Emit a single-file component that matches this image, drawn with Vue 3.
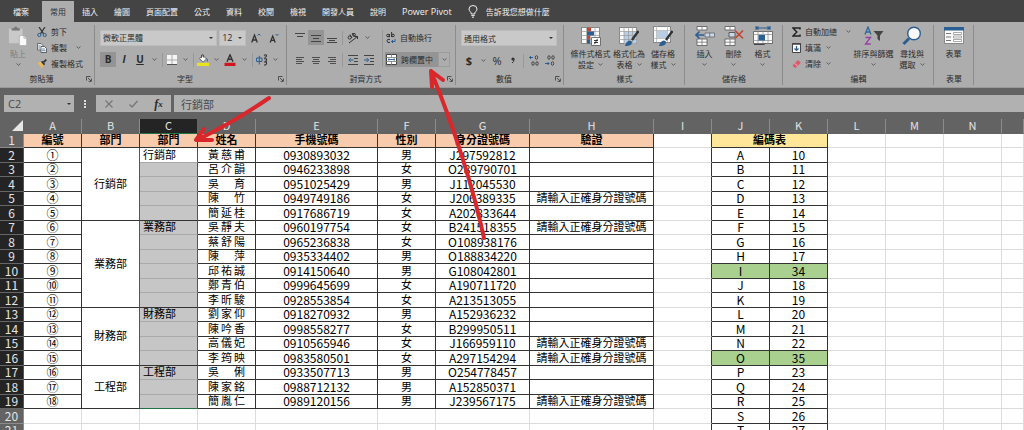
<script setup>
import { h, ref } from 'vue'

const Caret = () =>
  h('svg', { width: 5, height: 3, viewBox: '0 0 5 3' }, [
    h('path', { d: 'M0.5 0.4L2.5 2.3L4.5 0.4', fill: 'none', stroke: '#555', 'stroke-width': 0.9 }),
  ])

const Launcher = () =>
  h('svg', { width: 6, height: 6, viewBox: '0 0 6 6' }, [
    h('path', { d: 'M0.5 4.5V0.5H4.5M2 2L5 5M5.4 2.6V5.4H2.6', fill: 'none', stroke: '#444', 'stroke-width': 0.9 }),
  ])

const tabs = ['檔案', '常用', '插入', '繪圖', '頁面配置', '公式', '資料', '校閱', '檢視', '開發人員', '說明', 'Power Pivot']
const formula = ref('行銷部')
const cellName = ref('C2')
const fontName = ref('微軟正黑體')
const fontSize = ref('12')
const numberFormat = ref('通用格式')

const columns = ['A', 'B', 'C', 'D', 'E', 'F', 'G', 'H', 'I', 'J', 'K', 'L', 'M', 'N', '']
const warn = '請輸入正確身分證號碼'

const people = [
  ['①', '黃慈甫', '0930893032', '男', 'J297592812', ''],
  ['②', '呂介韻', '0946233898', '女', 'O289790701', ''],
  ['③', '吳育', '0951025429', '男', 'J112045530', ''],
  ['④', '陳竹', '0949749186', '女', 'J206389335', warn],
  ['⑤', '簡延桂', '0917686719', '女', 'A202833644', ''],
  ['⑥', '吳靜夫', '0960197754', '女', 'B241518355', warn],
  ['⑦', '蔡舒陽', '0965236838', '女', 'O108938176', ''],
  ['⑧', '陳萍', '0935334402', '男', 'O188834220', ''],
  ['⑨', '邱祐誠', '0914150640', '男', 'G108042801', ''],
  ['⑩', '鄭青伯', '0999645699', '女', 'A190711720', ''],
  ['⑪', '李昕駿', '0928553854', '女', 'A213513055', ''],
  ['⑫', '劉家仰', '0918270932', '男', 'A152936232', ''],
  ['⑬', '陳吟香', '0998558277', '女', 'B299950511', ''],
  ['⑭', '高儀妃', '0910565946', '女', 'J166959110', warn],
  ['⑮', '李筠映', '0983580501', '女', 'A297154294', warn],
  ['⑯', '吳俐', '0933507713', '男', 'O254778457', ''],
  ['⑰', '陳家銘', '0988712132', '男', 'A152850371', ''],
  ['⑱', '簡胤仁', '0989120156', '男', 'J239567175', warn],
]

const departments = {
  0: { name: '行銷部', span: 5 },
  5: { name: '業務部', span: 6 },
  11: { name: '財務部', span: 4 },
  15: { name: '工程部', span: 3 },
}

const codes = [
  ['A', 10], ['B', 11], ['C', 12], ['D', 13], ['E', 14], ['F', 15], ['G', 16], ['H', 17], ['I', 34], ['J', 18],
  ['K', 19], ['L', 20], ['M', 21], ['N', 22], ['O', 35], ['P', 23], ['Q', 24], ['R', 25], ['S', 26], ['T', 27],
]
</script>

<template>
  <div class="app">
    <nav class="tabs">
      <button v-for="t in tabs" :key="t" type="button" :class="['tab', { on: t === '常用', file: t === '檔案', latin: t === 'Power Pivot' }]">{{ t }}</button>
      <button type="button" class="tell">
        <svg width="10" height="13" viewBox="0 0 10 13" fill="none" stroke="#eee" stroke-width="1">
          <path d="M3.2 9V8C3 6.8 1 6.200 1 4A4 3.500 0 0 1 9 4C9 6.200 7 6.800 6.800 8V9ZM3.300 10.600H6.700M4 12.200H6" />
        </svg>
        <span>告訴我您想做什麼</span>
      </button>
    </nav>

    <div class="ribbon">
      <section class="group clip">
        <div class="body">
          <button type="button" class="big paste">
            <svg width="20" height="22" viewBox="0 0 20 22">
              <path d="M0 3H15V19H0Z" fill="#c9c9c9" />
              <path d="M3 5V2.500H5.500Q6 0.500 7.500 0.500T9.500 2.500H12V5Z" fill="#777" />
              <path d="M11.500 10.500H16.500L19.500 13.500V21.500H11.500Z" fill="#fafafa" stroke="#aaa" stroke-width="0.800" />
              <path d="M16.500 10.500V13.500H19.500" fill="none" stroke="#999" stroke-width="0.700" />
            </svg>
            <span class="dim">貼上</span>
            <Caret />
          </button>
          <div class="stack">
            <button type="button" class="small">
              <svg width="10" height="10" viewBox="0 0 10 10" fill="none">
                <path d="M2 0L6.600 6.800M8 0L3.400 6.800" stroke="#333" stroke-width="1.200" />
                <circle cx="2.300" cy="8" r="1.600" stroke="#2b5f93" /><circle cx="7.700" cy="8" r="1.600" stroke="#2b5f93" />
              </svg>剪下
            </button>
            <button type="button" class="small">
              <svg width="10" height="10" viewBox="0 0 10 10">
                <path d="M0.500 0.500H4L6 2.500V7H0.500Z" fill="#eee" stroke="#555" stroke-width="0.800" />
                <path d="M4 3.500H7.500L9.500 5.500V9.500H4Z" fill="#fff" stroke="#444" stroke-width="0.800" />
                <path d="M5 6H8M5 7.700H8.500M1.500 3H3.500M1.500 5H3" stroke="#2b5f93" stroke-width="0.700" />
              </svg>複製<Caret class="far" />
            </button>
            <button type="button" class="small">
              <svg width="10" height="10" viewBox="0 0 10 10">
                <path d="M0.500 4L4 2.800L7 6.500L4.500 9.500Q3.500 7 0.500 4Z" fill="#e9b95c" />
                <path d="M4 2.800L5.300 1.800L8 5L7 6.500Z" fill="#333" /><path d="M6.500 3.300L9.300 0.600" stroke="#333" stroke-width="1.800" />
              </svg>複製格式
            </button>
          </div>
        </div>
        <footer>剪貼簿<button type="button" class="launch" aria-label="剪貼簿設定"><Launcher /></button></footer>
      </section>

      <section class="group font">
        <div class="body rows">
          <div class="row fields">
            <label class="pick name"><select v-model="fontName" aria-label="字型"><option>微軟正黑體</option></select><i></i></label>
            <label class="pick size"><select v-model="fontSize" aria-label="字型大小"><option>12</option></select><i></i></label>
            <button type="button" class="t" aria-label="放大字型">
              <svg width="10" height="10" viewBox="0 0 10 10" fill="none" stroke="#333"><path d="M0.700 9.500L3.500 2L6.300 9.500M1.600 7H5.400" stroke-width="1.300" /><path d="M6.500 2.500L8 1L9.500 2.500" stroke="#2b5f93" /></svg>
            </button>
            <button type="button" class="t" aria-label="縮小字型">
              <svg width="10" height="10" viewBox="0 0 10 10" fill="none" stroke="#333"><path d="M1.200 9.500L3.700 3L6.200 9.500M2 7.300H5.400" stroke-width="1.300" /><path d="M6.500 1L8 2.500L9.500 1" stroke="#2b5f93" /></svg>
            </button>
          </div>
          <div class="row">
            <button type="button" class="t on"><b>B</b></button>
            <button type="button" class="t"><b class="it">I</b></button>
            <button type="button" class="t"><b class="un">U</b></button>
            <button type="button" class="c" aria-label="底線選項"><Caret /></button><hr />
            <button type="button" class="n" aria-label="框線">
              <svg width="10" height="10" viewBox="0 0 10 10"><path d="M0 0H10V10H0Z" fill="#f6f6f6" /><path d="M5 0V10M0 5H10" stroke="#aaa" /><path d="M0 9.500H10" stroke="#555" /></svg>
            </button>
            <button type="button" class="c" aria-label="框線選項"><Caret /></button><hr />
            <button type="button" class="n" aria-label="填滿色彩">
              <svg width="12" height="12" viewBox="0 0 12 12"><path d="M2.500 4.500L6 1.500L9.500 5L6 8.200Z" fill="#fafafa" stroke="#555" stroke-width="0.900" /><path d="M4.500 4V1Q5.500 0 6.500 1V3.500" fill="none" stroke="#444" stroke-width="0.800" /><path d="M9.500 4Q11.500 5 10.800 8Q9.500 7 9.500 4Z" fill="#2b5f93" /><path d="M0 8.800H12V12H0Z" fill="#e8e31c" /></svg>
            </button>
            <button type="button" class="c" aria-label="填滿色彩選項"><Caret /></button>
            <button type="button" class="t" aria-label="字型色彩">
              <svg width="12" height="12" viewBox="0 0 12 12"><path d="M3 7.800L6 0.800L9 7.800M4.200 5.300H7.800" fill="none" stroke="#333" stroke-width="1.400" /><path d="M0.500 8.800H11.500V12H0.500Z" fill="#d2141c" /></svg>
            </button>
            <button type="button" class="c" aria-label="字型色彩選項"><Caret /></button><hr />
            <button type="button" class="n" aria-label="注音標示">
              <svg width="12" height="12" viewBox="0 0 12 12" fill="none"><path d="M0.600 4H6V7.500H0.600ZM3.300 1.800V10.500" stroke="#2b5f93" /><path d="M8 1.500Q10 0 10.500 1.700Q10.500 3 8.500 3.500M8 5Q11 4 10.500 6.200T8 8H10.500Q11 10 9.500 11H8" stroke="#333" stroke-width="1.100" /></svg>
            </button>
            <button type="button" class="c" aria-label="注音標示選項"><Caret /></button>
          </div>
        </div>
        <footer>字型<button type="button" class="launch" aria-label="字型設定"><Launcher /></button></footer>
      </section>

      <section class="group align">
        <div class="body split">
          <div class="rows left">
            <div class="row">
              <button type="button" class="t" aria-label="靠上對齊"><svg width="10" height="12" viewBox="0 0 10 12" stroke="#444"><path d="M0 1.500H10M2 4.500H8" /></svg></button>
              <button type="button" class="t on" aria-label="置中對齊"><svg width="10" height="12" viewBox="0 0 10 12" stroke="#444"><path d="M0 3.500H10M2 6.500H8M0 9.500H10" /></svg></button>
              <button type="button" class="t" aria-label="靠下對齊"><svg width="10" height="12" viewBox="0 0 10 12" stroke="#444"><path d="M0 6.500H10M2 8.500H8M0 10.500H10" /></svg></button><hr />
              <button type="button" class="t" aria-label="方向"><svg width="12" height="12" viewBox="0 0 12 12" fill="none" stroke="#333"><path d="M2 11L10.500 4.500M8 4.500H10.500V7" /><circle cx="2.700" cy="5.500" r="1.600" /><path d="M3 2.500L5 6M5 1L8 5" /><circle cx="7" cy="2.800" r="1.400" /></svg></button>
              <button type="button" class="c" aria-label="方向選項"><Caret /></button>
            </div>
            <div class="row">
              <button type="button" class="t" aria-label="靠左"><svg width="8" height="8" viewBox="0 0 8 8" stroke="#444"><path d="M0 1.500H8M0 3.500H6M0 5.500H8M0 7.500H6" stroke-width="0.900" /></svg></button>
              <button type="button" class="t" aria-label="置中"><svg width="8" height="8" viewBox="0 0 8 8" stroke="#444"><path d="M0 1.500H8M1 3.500H7M0 5.500H8M1 7.500H7" stroke-width="0.900" /></svg></button>
              <button type="button" class="t" aria-label="靠右"><svg width="8" height="8" viewBox="0 0 8 8" stroke="#444"><path d="M0 1.500H8M2 3.500H8M0 5.500H8M2 7.500H8" stroke-width="0.900" /></svg></button><hr />
              <button type="button" class="t" aria-label="減少縮排"><svg width="10" height="10" viewBox="0 0 10 10" fill="none" stroke="#444"><path d="M0 0.500H10M6 3.500H10M6 6.500H10M0 9.500H10" /><path d="M5.500 5H1M2.800 3L0.800 5L2.800 7" stroke="#2b5f93" /></svg></button>
              <button type="button" class="t" aria-label="增加縮排"><svg width="10" height="10" viewBox="0 0 10 10" fill="none" stroke="#444"><path d="M0 0.500H10M6 3.500H10M6 6.500H10M0 9.500H10" /><path d="M0 5H4.500M2.700 3L4.700 5L2.700 7" stroke="#2b5f93" /></svg></button>
            </div>
          </div>
          <hr class="tall" />
          <div class="rows">
            <button type="button" class="wide">
              <svg width="10" height="12" viewBox="0 0 10 12" fill="none" stroke="#333"><circle cx="2" cy="3.500" r="1.300" /><path d="M3.500 2V5.200M5.600 0V5M4 7.500Q1 6.500 1 8.800T4 10.500" /><circle cx="7" cy="3.500" r="1.300" /><path d="M9 7V9.500H5.500M7 8L5.500 9.500L7 11" stroke="#2b5f93" /></svg>自動換行
            </button>
            <div class="row">
              <button type="button" class="wide on">
                <svg width="11" height="11" viewBox="0 0 11 11"><path d="M0.500 0.500H10.500V10.500H0.500Z" fill="#fff" stroke="#444" /><path d="M0 3.500H11M0 7.500H11M5.500 0V3.500M5.500 7.500V11" stroke="#777" stroke-width="0.800" /><path d="M2 5.500H9M3.300 4.500L2 5.500L3.300 6.500M7.700 4.500L9 5.500L7.700 6.500" fill="none" stroke="#2b5f93" stroke-width="0.900" /></svg>跨欄置中
              </button>
              <button type="button" class="c edge" aria-label="跨欄置中選項"><Caret /></button>
            </div>
          </div>
        </div>
        <footer>對齊方式<button type="button" class="launch" aria-label="對齊設定"><Launcher /></button></footer>
      </section>

      <section class="group num">
        <div class="body rows">
          <label class="pick format"><select v-model="numberFormat" aria-label="數值格式"><option>通用格式</option></select><i></i></label>
          <div class="row">
            <button type="button" class="t sign"><b>$</b></button>
            <button type="button" class="c" aria-label="會計格式選項"><Caret /></button>
            <button type="button" class="t sign">%</button>
            <button type="button" class="t" aria-label="千分位樣式"><svg width="4" height="7" viewBox="0 0 4 7"><circle cx="2" cy="2" r="1.600" fill="#333" /><path d="M3 2.500Q3 5 1 6" fill="none" stroke="#333" /></svg></button><hr />
            <button type="button" class="t" aria-label="增加小數位數"><svg width="10" height="11" viewBox="0 0 10 11" fill="none" stroke="#444"><path d="M4 2.500H0.500M2 1L0.500 2.500L2 4" stroke="#2b5f93" /><ellipse cx="7.500" cy="2.500" rx="1.200" ry="1.800" /><ellipse cx="4" cy="8.500" rx="1.200" ry="1.800" /><ellipse cx="8" cy="8.500" rx="1.200" ry="1.800" /></svg></button>
            <button type="button" class="t" aria-label="減少小數位數"><svg width="10" height="11" viewBox="0 0 10 11" fill="none" stroke="#444"><ellipse cx="4" cy="2.500" rx="1.200" ry="1.800" /><ellipse cx="8" cy="2.500" rx="1.200" ry="1.800" /><path d="M0 8.500H4M2.600 7L4 8.500L2.600 10" stroke="#2b5f93" /><ellipse cx="7.500" cy="8.500" rx="1.200" ry="1.800" /></svg></button>
          </div>
        </div>
        <footer>數值<button type="button" class="launch" aria-label="數值設定"><Launcher /></button></footer>
      </section>

      <section class="group styles">
        <div class="body">
          <button type="button" class="big w4">
            <svg width="20" height="20" viewBox="0 0 20 20"><path d="M0.500 1.500H18.500V17.500H0.500Z" fill="#fafafa" stroke="#666" stroke-width="0.700" /><path d="M0 5.500H18M0 9.500H18M0 13.500H18M5.500 1V17M9.500 1V17M14 1V17" stroke="#999" stroke-width="0.700" /><path d="M6 1.500H10V5.500H6ZM6 9.500H9V13.500H6Z" fill="#c2452d" /><path d="M6 5.500H13V9.500H6ZM6 13.500H9V17.500H6Z" fill="#2b5f93" /><path d="M10.500 11.500H19.500V19.500H10.500Z" fill="#fff" stroke="#555" stroke-width="0.800" /><path d="M13 14.500H17M13 16.500H17M16.500 12.800L13.500 18.200" stroke="#222" stroke-width="0.900" /></svg>
            <span>條件式格式</span><span>設定 <Caret /></span>
          </button>
          <button type="button" class="big w3">
            <svg width="20" height="20" viewBox="0 0 20 20"><path d="M0.500 1.500H17.500V17.500H0.500Z" fill="#fafafa" stroke="#666" stroke-width="0.700" /><path d="M5 5.500H17.500V17.500H5Z" fill="#b9cee4" /><path d="M0 5.500H18M0 9.500H18M0 13.500H18M5 1V17M9.500 1V17M13.500 1V17" stroke="#999" stroke-width="0.700" /><path d="M19.500 5L13 14" stroke="#333" stroke-width="2.400" /><path d="M6 20Q7 15 11 14.500Q14 15 12.500 18Q11 20 6 20Z" fill="#2b5f93" /></svg>
            <span>格式化為</span><span>表格 <Caret /></span>
          </button>
          <button type="button" class="big w3">
            <svg width="20" height="20" viewBox="0 0 20 20"><path d="M0.500 0.500H17.500V16.500H0.500Z" fill="#fafafa" stroke="#666" stroke-width="0.700" /><path d="M0 4.500H18M0 12.500H18M3.500 0V16M14.500 0V16" stroke="#aaa" stroke-width="0.700" /><path d="M4 5H14V12H4Z" fill="#b9cee4" /><path d="M19.500 5L13 14" stroke="#333" stroke-width="2.400" /><path d="M6 20Q7 15 11 14.500Q14 15 12.500 18Q11 20 6 20Z" fill="#2b5f93" /></svg>
            <span>儲存格</span><span>樣式 <Caret /></span>
          </button>
        </div>
        <footer>樣式</footer>
      </section>

      <section class="group cells">
        <div class="body">
          <button type="button" class="big w2">
            <svg width="20" height="20" viewBox="0 0 20 20"><path d="M2 0.500H12V4H2ZM2 13H12V19.500H2Z" fill="#fafafa" stroke="#555" stroke-width="0.800" /><path d="M7 0.500V4M7 13V19.500M2 16.200H12" stroke="#777" stroke-width="0.800" /><path d="M10 7H19.500V11H10Z" fill="#c9d9ea" stroke="#666" stroke-width="0.800" /><path d="M14.700 7V11" stroke="#666" stroke-width="0.800" /><path d="M9 9H1M4.500 5.500L1 9L4.500 12.500" fill="none" stroke="#2b5f93" stroke-width="1.700" /></svg>
            <span>插入</span><Caret />
          </button>
          <button type="button" class="big w2">
            <svg width="20" height="20" viewBox="0 0 20 20"><path d="M1 0.500H11V4H1ZM1 13H11V19.500H1Z" fill="#fafafa" stroke="#555" stroke-width="0.800" /><path d="M6 0.500V4M6 13V19.500M1 16.200H11" stroke="#777" stroke-width="0.800" /><path d="M5 6.500H11V11H5Z" fill="#c9d9ea" stroke="#444" stroke-width="0.800" /><path d="M11 4.500L19 12.500M19 4.500L11 12.500" stroke="#c2452d" stroke-width="1.600" /></svg>
            <span>刪除</span><Caret />
          </button>
          <button type="button" class="big w2">
            <svg width="20" height="20" viewBox="0 0 20 20"><path d="M3 2H17M3 0V4M17 0V4M5.500 0.500L3.500 2L5.500 3.500M14.500 0.500L16.500 2L14.500 3.500" fill="none" stroke="#2b5f93" stroke-width="1.100" /><path d="M0.500 5.500H19.500V17.500H0.500Z" fill="#fafafa" stroke="#555" stroke-width="0.800" /><path d="M0 8.500H20M0 14.500H20M5 5V17.500M10 5V8.500M10 14.500V17.500M15 5V17.500" stroke="#888" stroke-width="0.700" /><path d="M5.500 9H12V14.500H5.500Z" fill="#2b5f93" /><path d="M1 18.500H11L12.500 17.500" stroke="#444" fill="none" /></svg>
            <span>格式</span><Caret />
          </button>
        </div>
        <footer>儲存格</footer>
      </section>

      <section class="group edit">
        <div class="body">
          <div class="stack">
            <button type="button" class="small"><svg width="9" height="10" viewBox="0 0 9 10"><path d="M8 2.500V1H1L4.800 5L1 9H8V7.500" fill="none" stroke="#222" stroke-width="1.500" /></svg>自動加總<Caret class="far" /></button>
            <button type="button" class="small"><svg width="9" height="10" viewBox="0 0 9 10"><path d="M0.500 0.500H8.500V9.500H0.500Z" fill="#fafafa" stroke="#444" /><path d="M0 1H9" stroke="#444" stroke-width="1.500" /><path d="M4.500 3V7.500M2.500 5.500L4.500 7.500L6.500 5.500" fill="none" stroke="#2b5f93" stroke-width="1.200" /></svg>填滿<Caret class="near" /></button>
            <button type="button" class="small"><svg width="9" height="10" viewBox="0 0 9 10"><path d="M0.500 6.500L6 1L8.800 3.700L3.300 9.200Z" fill="#e0566f" /><path d="M2.700 4.300L5.500 7" stroke="#f3c3cb" /></svg>清除<Caret class="near" /></button>
          </div>
          <button type="button" class="big w4">
            <svg width="20" height="20" viewBox="0 0 20 20" fill="none"><path d="M1 8.500L4 1L7 8.500M2.200 6H5.800" stroke="#2b6aa0" stroke-width="1.300" /><path d="M1.500 11.500H6.500L1.500 18H6.800" stroke="#9a3da6" stroke-width="1.300" /><path d="M9.500 5H19.500L16 9.500V15L13.500 13V9.500Z" fill="#444" /></svg>
            <span>排序與篩選</span><Caret />
          </button>
          <button type="button" class="big w3">
            <svg width="20" height="20" viewBox="0 0 20 20"><path d="M7 12.500L1.500 18" stroke="#2b5f93" stroke-width="3" /><circle cx="12" cy="7.500" r="6.300" fill="#fafafa" stroke="#2b5f93" stroke-width="1.400" /></svg>
            <span>尋找與</span><span>選取 <Caret /></span>
          </button>
        </div>
        <footer>編輯</footer>
      </section>

      <section class="group form">
        <div class="body">
          <button type="button" class="big w2">
            <svg width="20" height="20" viewBox="0 0 20 20"><path d="M0.500 1.500H19.500V17.500H0.500Z" fill="#fafafa" stroke="#777" stroke-width="0.800" /><path d="M0 1H20V4.500H0Z" fill="#2b5f93" /><path d="M2 7.500H7M2 11H7M2 14.500H7" stroke="#777" /><path d="M9.500 6.500H17.500V8.500H9.500ZM9.500 10H17.500V12H9.500ZM9.500 13.500H17.500V15.500H9.500Z" fill="#fff" stroke="#888" stroke-width="0.700" /></svg>
            <span>表單</span>
          </button>
        </div>
        <footer>表單</footer>
      </section>
    </div>

    <div class="formula">
      <label class="pick cellname"><input v-model="cellName" aria-label="名稱方塊" /><i></i></label>
      <svg class="dots" width="2" height="8" viewBox="0 0 2 8" fill="#ddd"><path d="M0 0H2V2H0ZM0 3H2V5H0ZM0 6H2V8H0Z" /></svg>
      <div class="actions">
        <button type="button" aria-label="取消"><svg width="8" height="8" viewBox="0 0 8 8" stroke="#777" stroke-width="1.200"><path d="M0.500 0.500L7.500 7.500M7.500 0.500L0.500 7.500" /></svg></button>
        <button type="button" aria-label="輸入"><svg width="9" height="8" viewBox="0 0 9 8" fill="none" stroke="#777" stroke-width="1.400"><path d="M0.500 4.500L3 7L8.500 1" /></svg></button>
        <button type="button" class="fx"><i>f</i><small>x</small></button>
      </div>
      <input v-model="formula" class="entry" aria-label="資料編輯列" />
    </div>

    <table class="sheet">
      <colgroup>
        <col class="ch" /><col class="cn" /><col class="cn" /><col class="cn" /><col class="cn" /><col class="ce" /><col class="cn" /><col class="cg" /><col class="cx" />
        <col class="cn" /><col class="cn" /><col class="cn" /><col class="cn" /><col class="cn" /><col class="cn" /><col />
      </colgroup>
      <thead>
        <tr>
          <th class="corner"><svg width="11" height="11" viewBox="0 0 11 11"><path d="M11 0V11H0Z" fill="#e6e6e6" /></svg></th>
          <th v-for="(c, i) in columns" :key="i" :class="{ picked: c === 'C' }">{{ c }}</th>
        </tr>
      </thead>
      <tbody>
        <tr>
          <th>1</th>
          <td v-for="(t, i) in ['編號', '部門', '部門', '姓名', '手機號碼', '性別', '身分證號碼', '驗證']" :key="i" class="d peach">{{ t }}</td>
          <td class="pre"></td>
          <td colspan="2" class="d yellow">編碼表</td>
          <td></td><td></td><td></td><td></td>
        </tr>
        <tr v-for="(p, r) in people" :key="r">
          <th class="picked">{{ r + 2 }}</th>
          <td class="d ring">{{ p[0] }}</td>
          <td v-if="departments[r]" class="d dept" :rowspan="departments[r].span">{{ departments[r].name }}</td>
          <td :class="['sel', { first: r === 0, last: r === 17, head: departments[r + 1] }]">{{ departments[r] ? departments[r].name : '' }}</td>
          <td class="d person">{{ p[1] }}</td>
          <td class="d">{{ p[2] }}</td>
          <td class="d han">{{ p[3] }}</td>
          <td class="d">{{ p[4] }}</td>
          <td class="d han">{{ p[5] }}</td>
          <td class="pre"></td>
          <td :class="['d', { green: codes[r][1] > 30 }]">{{ codes[r][0] }}</td>
          <td :class="['d', { green: codes[r][1] > 30 }]">{{ codes[r][1] }}</td>
          <td></td><td></td><td></td><td></td>
        </tr>
        <tr v-for="r in [18, 19]" :key="r">
          <th>{{ r + 2 }}</th>
          <td v-for="n in 8" :key="n"></td>
          <td class="pre"></td>
          <td class="d">{{ codes[r][0] }}</td>
          <td class="d">{{ codes[r][1] }}</td>
          <td></td><td></td><td></td><td></td>
        </tr>
      </tbody>
    </table>

    <svg class="marks" width="500" height="250" viewBox="0 0 500 250" fill="none" stroke="#d9272b" stroke-width="4" stroke-linecap="round" stroke-linejoin="round">
      <path d="M269 98Q234 122 197 140M204 129L196 140L212 140" />
      <path d="M484 238Q467 160 431 71M432 87L431 71L443 80" />
    </svg>
  </div>
</template>

<style>
body {
  margin: 0;
  overflow: hidden;
}
</style>

<style scoped>
.app {
  position: relative;
  height: 100vh;
  overflow: hidden;
  background: #fff;
  color: #2b2b2b;
  font: 8px/11px 'Open Sans', 'Noto Sans CJK TC', sans-serif;
}
.app * {
  box-sizing: border-box;
}
button,
input,
select {
  margin: 0;
  padding: 0;
  border: 0;
  border-radius: 0;
  background: none;
  color: inherit;
  font: inherit;
  outline: 0;
}
svg {
  display: block;
  flex: none;
}
.tabs {
  display: flex;
  height: 22px;
  background: #444;
  color: #f2f2f2;
}
.tab {
  padding: 0 8px;
  white-space: nowrap;
}
.tab.latin {
  font-size: 9px;
}
.tab.file {
  padding: 0 13px;
}
.tab.on {
  margin-top: 1px;
  background: #adadad;
  color: #333;
}
.tell {
  display: flex;
  align-items: center;
  gap: 8px;
  margin-left: 8px;
  white-space: nowrap;
}
.ribbon {
  display: flex;
  height: 66px;
  padding-top: 2px;
  background: #adadad;
  border-bottom: 1px solid #999;
}
.group {
  position: relative;
  display: flex;
  flex: none;
  flex-direction: column;
  height: 61px;
}
.group::after {
  content: '';
  position: absolute;
  top: 1px;
  right: 0;
  bottom: 0;
  width: 1px;
  background: #8c8c8c;
}
.clip { width: 95px; }
.font { width: 192px; }
.align { width: 169px; }
.num { width: 108px; }
.styles { width: 121px; }
.cells { width: 98px; }
.edit { width: 151px; }
.form { width: 40px; }
.body {
  display: flex;
  flex: 1;
  padding: 2px 5px 0;
}
footer {
  display: flex;
  align-items: center;
  justify-content: center;
  height: 13px;
}
.launch {
  position: absolute;
  right: 3px;
  bottom: 3px;
}
.clip footer,
.font footer,
.align footer,
.num footer {
  padding-right: 12px;
}
.rows {
  display: flex;
  flex-direction: column;
  gap: 7px;
}
.body.rows,
.body.split {
  padding-top: 6px;
}
.row {
  display: flex;
  align-items: center;
  height: 15px;
}
.fields {
  gap: 2px;
}
.left {
  width: 88px;
}
hr {
  width: 1px;
  height: 14px;
  margin: 0 2px;
  border: 0;
  background: #989898;
}
hr.tall {
  height: 37px;
}
.t,
.n,
.c {
  display: flex;
  flex: none;
  align-items: center;
  justify-content: center;
  width: 16px;
  height: 15px;
}
.n { width: 14px; }
.c { width: 12px; }
.t b {
  font-size: 10px;
}
.on {
  background: #949494;
}
.it {
  font-style: italic;
}
.un {
  text-decoration: underline;
}
.sign,
.sign b {
  font-size: 11px;
}
.wide {
  display: flex;
  align-items: center;
  gap: 4px;
  height: 15px;
  padding: 0 4px 0 1px;
  white-space: nowrap;
}
.wide.on {
  padding-right: 5px;
}
.edge {
  border: 1px solid #9c9c9c;
}
.pick {
  position: relative;
  display: flex;
  align-items: center;
  height: 16px;
  border: 1px solid #bdbdbd;
  background: #c9c9c9;
}
.pick select,
.pick input {
  width: 100%;
  height: 100%;
  padding: 0 2px;
  appearance: none;
}
.pick i {
  position: absolute;
  right: 3px;
  border: 2px solid transparent;
  border-top-color: #333;
  border-bottom: 0;
  pointer-events: none;
}
.pick.name { width: 118px; }
.pick.size { width: 27px; }
.pick.size select { font-size: 9px; }
.pick.format { width: 96px; }
.stack {
  display: flex;
  flex-direction: column;
  gap: 5px;
}
.small {
  display: flex;
  align-items: center;
  gap: 4px;
  height: 11px;
  white-space: nowrap;
}
.far { margin-left: 5px; }
.near { margin-left: 1px; }
.big {
  display: flex;
  flex: none;
  flex-direction: column;
  align-items: center;
  white-space: nowrap;
}
.big > svg:first-child {
  height: 20px;
  margin-bottom: 2px;
}
.big > svg:last-child {
  margin-top: 4px;
}
.big span {
  display: flex;
  align-items: center;
  gap: 4px;
}
.big .dim {
  color: #7c7c7c;
}
.paste {
  width: 26px;
  margin-right: 6px;
}
.w2 { width: 29px; }
.w3 { width: 34px; }
.w4 { width: 43px; }
.edit .body {
  padding-left: 9px;
}
.edit .stack {
  width: 63px;
}
.formula {
  display: flex;
  align-items: center;
  height: 31px;
  padding-left: 4px;
  background: #636363;
}
.cellname {
  width: 70px;
  height: 17px;
  border: 0;
  background: #b1b1b1;
  font-size: 11px;
}
.pick.cellname input {
  padding-left: 4px;
  color: #4a4a4a;
}
.dots {
  margin: 0 10px;
}
.actions {
  display: flex;
  align-items: center;
  width: 75px;
  height: 17px;
  background: #b1b1b1;
}
.actions button {
  display: flex;
  flex: 1;
  align-items: center;
  justify-content: center;
}
.actions .fx {
  font: bold 12px/12px 'Liberation Serif', serif;
}
.fx small {
  font-size: 9px;
  font-style: italic;
}
.entry {
  flex: 1;
  min-width: 0;
  height: 17px;
  margin-left: 3px;
  padding-left: 7px;
  background: #b1b1b1;
  color: #4a4a4a;
  font-size: 11px;
}
.sheet {
  width: 100%;
  table-layout: fixed;
  border-collapse: separate;
  border-spacing: 0;
  background: #fff;
  color: #000;
  font: 12px/11px 'Noto Sans CJK TC', sans-serif;
}
.ch { width: 24px; }
.cn { width: 58px; }
.ce { width: 122px; }
.cg { width: 94px; }
.cx { width: 124px; }
tr { height: 15px; }
tbody tr:nth-child(odd) { height: 14px; }
th,
td {
  height: inherit;
  padding: 0 0 2px;
  border-right: 1px solid #dcdcdc;
  border-bottom: 1px solid #dcdcdc;
  text-align: center;
  white-space: nowrap;
}
th {
  border-color: #8c8c8c;
  background: #636363;
  color: #e4e4e4;
  font-weight: 400;
}
thead th {
  border-bottom-color: #636363;
  font-size: 11px;
}
.corner {
  border-color: #636363;
}
.corner svg {
  margin-left: auto;
}
th.picked {
  border-color: #666;
  border-right-color: #217346;
  background: #242424;
}
thead th.picked {
  border-right-color: #666;
  border-bottom-color: #217346;
}
.d {
  border-color: #333;
}
.pre {
  border-right-color: #333;
}
.peach,
.yellow {
  background: #f8cbad;
  font-size: 11px;
  font-weight: 700;
}
.yellow {
  background: #ffe699;
}
.green {
  background: #a9d08e;
}
.han,
.dept,
.sel,
.person {
  font-size: 11px;
}
.dept {
  border-right-color: #217346;
}
.sel {
  padding-left: 3px;
  border-color: #aaa;
  border-right-color: #217346;
  background: #c6c6c6;
  text-align: left;
}
.sel.head {
  border-bottom-color: #333;
}
.sel.first {
  background: #fff;
}
.sel.last {
  border-bottom-color: #217346;
}
.person {
  padding: 0 10px 2px;
  text-align: justify;
  text-align-last: justify;
}
.marks {
  position: absolute;
  top: 0;
  left: 0;
  pointer-events: none;
}
</style>
